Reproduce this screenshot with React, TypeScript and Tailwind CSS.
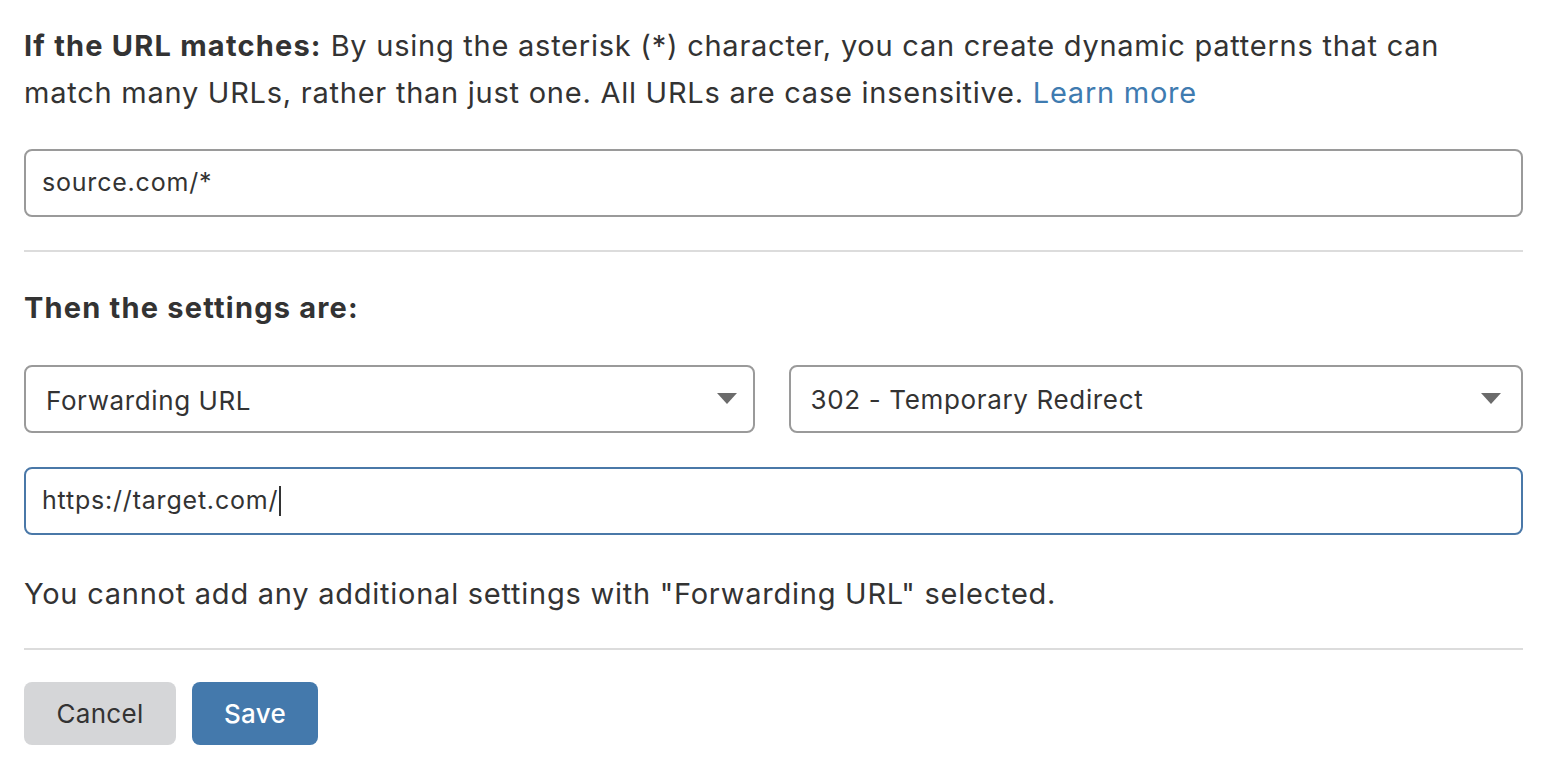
import React from "react";

function Caret() {
  return (
    <svg width="20" height="12" viewBox="0 0 20 12" className="shrink-0">
      <path d="M0 0 L20 0 L10 11 Z" fill="#6b6b6b" />
    </svg>
  );
}

export default function App() {
  return (
    <div className="w-[1554px] h-[774px] bg-white text-[#333333] overflow-hidden" style={{ fontFamily: "Inter, 'Noto Sans', sans-serif" }}>
      <div className="pl-[24px] pr-[31px] pt-[22px]">
        <p className="text-[29px] leading-[47px] tracking-[0.75px]">
          <span className="font-bold tracking-[1.2px]">If the URL matches:</span> By using the asterisk (*) character, you can create dynamic patterns that can match many URLs, rather than just one. All URLs are case insensitive.{" "}
          <span className="text-[#3f7bb0]">Learn more</span>
        </p>
        <div className="mt-[33px] h-[68px] border-2 border-[#9a9a9a] rounded-[8px] flex items-center px-[16px] text-[25px] tracking-[0.8px]">
          source.com/*
        </div>
        <div className="mt-[33px] h-[2px] bg-[#dcdcdc]" />
        <h2 className="mt-[38px] text-[29px] leading-[36px] font-bold tracking-[1.2px]">Then the settings are:</h2>
        <div className="mt-[39px] flex gap-[34px]">
          <div className="flex-1 h-[68px] border-2 border-[#9a9a9a] rounded-[8px] flex items-center justify-between pl-[20px] pr-[16px] text-[26px] tracking-[0.6px]">
            <span className="mt-[2px]">Forwarding URL</span>
            <Caret />
          </div>
          <div className="flex-1 h-[68px] border-2 border-[#9a9a9a] rounded-[8px] flex items-center justify-between pl-[20px] pr-[20px] text-[26px] tracking-[0.65px]">
            <span>302 - Temporary Redirect</span>
            <Caret />
          </div>
        </div>
        <div className="mt-[34px] h-[68px] border-2 border-[#4a78a8] rounded-[8px] flex items-center px-[16px] text-[25px] tracking-[0.8px]">
          https://target.com/<span className="inline-block w-[2px] h-[30px] bg-[#333] ml-[1px]" />
        </div>
        <p className="mt-[39px] text-[29px] leading-[40px] tracking-[0.75px]">You cannot add any additional settings with "Forwarding URL" selected.</p>
        <div className="mt-[34px] h-[2px] bg-[#dcdcdc]" />
        <div className="mt-[32px] flex gap-[16px]">
          <button className="w-[152px] h-[63px] rounded-[8px] bg-[#d5d6d8] text-[26px] text-[#333] tracking-[0.3px]">Cancel</button>
          <button className="w-[126px] h-[63px] rounded-[8px] bg-[#4479ac] text-[26px] text-white font-medium tracking-[0.3px]">Save</button>
        </div>
      </div>
    </div>
  );
}
